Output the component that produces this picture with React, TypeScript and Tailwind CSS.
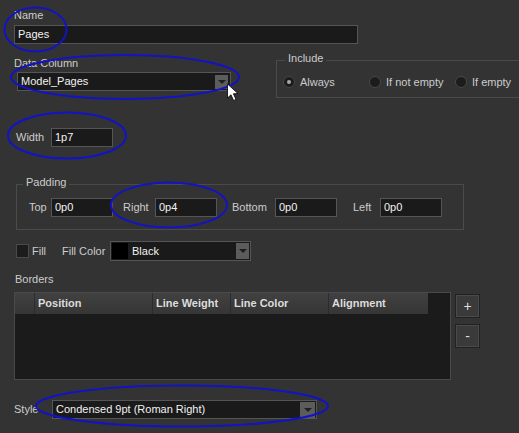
import React from "react";

const field = "h-[19px] border border-[#555555] bg-[#1a1a1a] text-[#f2f2f2] leading-[17px] pl-[3px]";

const DropArrow = ({ className = "" }: { className?: string }) => (
  <div className={`flex items-center justify-center bg-[#5c5c5c] ${className}`}>
    <div className="h-0 w-0 border-x-[4px] border-t-[4px] border-x-transparent border-t-[#1e1e1e]" />
  </div>
);

const Radio = ({ label, checked = false }: { label: string; checked?: boolean }) => (
  <div className="flex w-[86px] items-center gap-[5px] leading-[14px]">
    <div className="flex h-[12px] w-[12px] items-center justify-center rounded-full border border-[#474747] bg-[#1c1c1c]">
      {checked && <div className="h-[4px] w-[4px] rounded-full bg-[#a8a8a8]" />}
    </div>
    <span>{label}</span>
  </div>
);

const PadInput = ({ label, labelW, value, className = "" }: { label: string; labelW: string; value: string; className?: string }) => (
  <div className={`flex items-center ${className}`}>
    <span className={labelW}>{label}</span>
    <div className={`w-[62px] ${field}`}>{value}</div>
  </div>
);

const Annotations = () => (
  <svg className="pointer-events-none absolute inset-0" width="519" height="433" viewBox="0 0 519 433">
    <g fill="none" stroke="#1212c8" strokeWidth="2">
      <ellipse cx="35.5" cy="29.5" rx="31" ry="22" />
      <ellipse cx="125" cy="77" rx="114" ry="22" />
      <ellipse cx="67" cy="135.5" rx="59" ry="23" />
      <ellipse cx="169" cy="205" rx="58" ry="22.5" />
      <ellipse cx="182" cy="406" rx="146" ry="20.5" />
    </g>
    {/* mouse pointer */}
    <path
      d="M227.5 84 L227.5 98 L231 94.8 L233.6 100.5 L236 99.4 L233.4 93.8 L238 93.6 Z"
      fill="#ffffff"
      stroke="#000000"
      strokeWidth="0.8"
      strokeLinejoin="round"
    />
  </svg>
);

export default function App() {
  return (
    <div className="relative h-[433px] w-[519px] overflow-hidden bg-[#333333] pl-[14px] pt-[8px] font-['Liberation_Sans',Arial,sans-serif] text-[11px] text-[#cccccc]">
      {/* Name */}
      <div className="leading-[14px]">Name</div>
      <div className={`mt-[3px] w-[344px] ${field}`}>Pages</div>

      {/* Data column + include */}
      <div className="flex items-start">
        <div className="flex flex-col">
          <div className="mt-[12px] leading-[14px]">Data Column</div>
          <div className={`ml-[3px] mt-[2px] flex w-[214px] items-center justify-between pr-[2px] ${field}`}>
            <span>Model_Pages</span>
            <DropArrow className="h-[14px] w-[13px]" />
          </div>
        </div>
        <fieldset className="ml-[45px] mt-[7px] w-[262px] shrink-0 border border-[#4a4a4a] pb-[8px] pt-[6px]">
          <legend className="ml-[8px] px-[3px] pb-[4px] leading-[14px]">Include</legend>
          <div className="flex pl-[6px]">
            <Radio label="Always" checked />
            <Radio label="If not empty" />
            <Radio label="If empty" />
          </div>
        </fieldset>
      </div>

      {/* Width */}
      <div className="ml-[2px] mt-[30px] flex items-center">
        <span className="w-[35px]">Width</span>
        <div className={`w-[62px] ${field}`}>1p7</div>
      </div>

      {/* Padding */}
      <fieldset className="ml-[2px] mt-[28px] w-[448px] border border-[#4a4a4a] pb-[12px] pt-[5px]">
        <legend className="ml-[6px] px-[3px] pb-[4px] leading-[14px]">Padding</legend>
        <div className="flex pl-[12px]">
          <PadInput label="Top" labelW="w-[22px]" value="0p0" />
          <PadInput label="Right" labelW="w-[32px]" value="0p4" className="ml-[10px]" />
          <PadInput label="Bottom" labelW="w-[43px]" value="0p0" className="ml-[15px]" />
          <PadInput label="Left" labelW="w-[27px]" value="0p0" className="ml-[16px]" />
        </div>
      </fieldset>

      {/* Fill */}
      <div className="ml-[2px] mt-[11px] flex h-[20px] items-center">
        <div className="h-[14px] w-[13px] border border-[#4a4a4a] bg-[#1c1c1c]" />
        <span className="ml-[3px] w-[30px]">Fill</span>
        <span className="w-[48px]">Fill Color</span>
        <div className="flex h-[20px] w-[141px] items-center border border-[#555555] bg-[#1a1a1a] px-px text-[#f2f2f2]">
          <div className="h-[16px] w-[16px] bg-black" />
          <span className="ml-[4px] flex-1">Black</span>
          <DropArrow className="h-[16px] w-[13px]" />
        </div>
      </div>

      {/* Borders */}
      <div className="ml-px mt-[11px] leading-[14px]">Borders</div>
      <div className="mt-[6px] flex items-start">
        <div className="h-[88px] w-[437px] border border-[#4a4a4a] bg-[#1b1b1b]">
          <div className="flex h-[21px] w-[413px] bg-gradient-to-b from-[#414141] to-[#363636] font-bold leading-[21px] text-[#dddddd]">
            <div className="w-[20px] border-r border-[#2c2c2c]" />
            <div className="w-[118px] border-r border-[#2c2c2c] pl-[3px]">Position</div>
            <div className="w-[78px] border-r border-[#2c2c2c] pl-[3px]">Line Weight</div>
            <div className="w-[98px] border-r border-[#2c2c2c] pl-[3px]">Line Color</div>
            <div className="w-[99px] pl-[3px]">Alignment</div>
          </div>
        </div>
        <div className="ml-[4px] mt-[2px] flex flex-col gap-[6px] text-[14px] text-[#dddddd]">
          <button className="flex h-[24px] w-[25px] items-center justify-center border border-[#222222] bg-[#3a3a3a] shadow-[inset_0_0_0_1px_#4a4a4a]">+</button>
          <button className="flex h-[24px] w-[25px] items-center justify-center border border-[#222222] bg-[#3a3a3a] shadow-[inset_0_0_0_1px_#4a4a4a]">-</button>
        </div>
      </div>

      {/* Style */}
      <div className="mt-[20px] flex items-center">
        <span className="w-[38px]">Style</span>
        <div className={`flex w-[265px] items-center justify-between pr-px ${field}`}>
          <span>Condensed 9pt (Roman Right)</span>
          <DropArrow className="h-[16px] w-[15px]" />
        </div>
      </div>

      <Annotations />
    </div>
  );
}
